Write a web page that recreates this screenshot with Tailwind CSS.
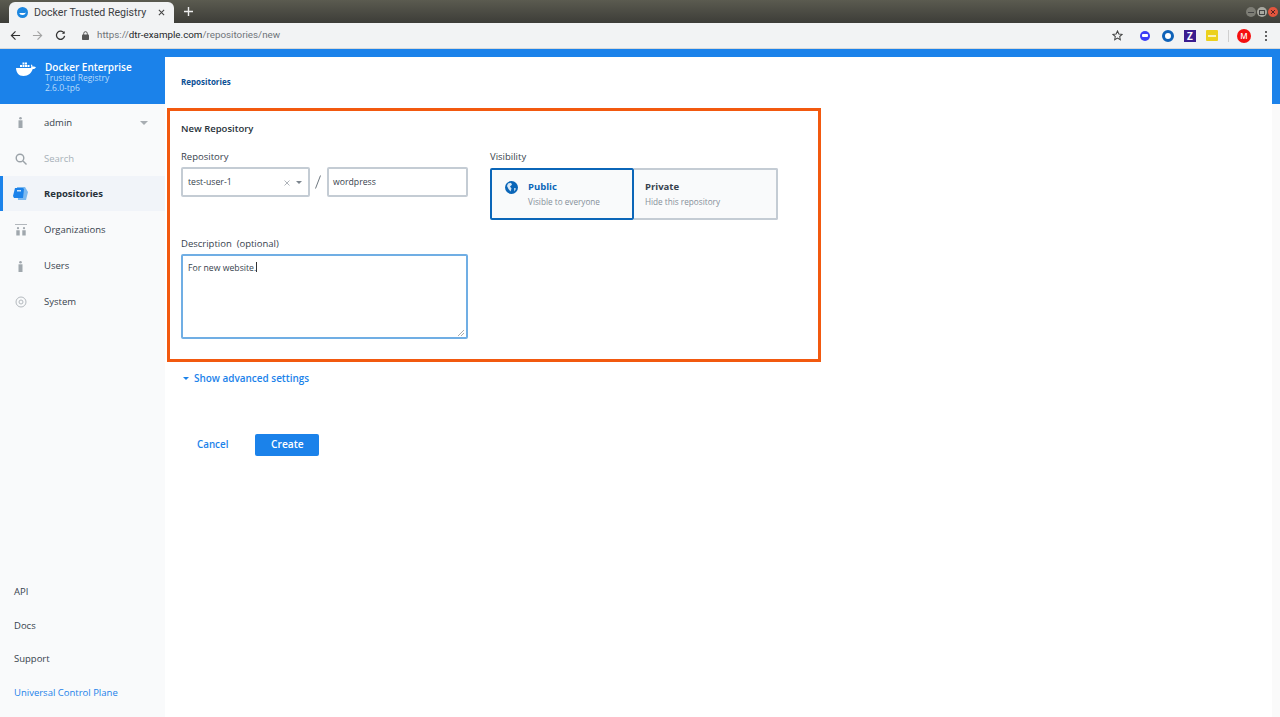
<!DOCTYPE html>
<html lang="en">
<head>
  <meta charset="UTF-8" />
  <title>Docker Trusted Registry</title>
  <script src="https://cdn.jsdelivr.net/npm/@tailwindcss/browser@4"></script>
</head>
<body class="h-[717px] w-[1280px] overflow-hidden bg-white font-['Open_Sans',sans-serif] text-[#37424d]">
  <!-- browser title bar -->
  <div class="flex h-[23px] items-end bg-gradient-to-b from-[#5b5b50] to-[#3d3d38] pl-[9px]">
    <div class="flex h-[21px] w-[165px] items-center rounded-t-[6px] bg-[#f2f3f4] pl-[8px] pr-[9px]">
      <svg class="h-[11px] w-[11px]" viewBox="0 0 12 12"><circle cx="6" cy="6" r="6" fill="#1d87e0"/><path d="M2.500 6.500h6c.6 0 1-.5 1.200-1-.3 2-1.600 3.200-3.700 3.200-2 0-3.200-.9-3.500-2.200z" fill="#fff"/></svg>
      <span class="ml-[6px] font-['Roboto',sans-serif] text-[10.600px] text-[#3c4043]">Docker Trusted Registry</span>
      <svg class="ml-auto h-[7px] w-[7px]" viewBox="0 0 8 8"><path d="M1 1l6 6M7 1L1 7" stroke="#444" stroke-width="1.200"/></svg>
    </div>
    <svg class="mb-[7px] ml-[10px] h-[9px] w-[9px]" viewBox="0 0 9 9"><path d="M4.500 0v9M0 4.500h9" stroke="#eee" stroke-width="1.400"/></svg>
    <div class="mb-[6px] ml-auto mr-[2px] flex gap-[1px]">
      <span class="flex h-[10px] w-[10px] items-center justify-center rounded-full bg-[#7d7d75]"><span class="h-px w-[6px] bg-[#444]"></span></span>
      <span class="flex h-[10px] w-[10px] items-center justify-center rounded-full bg-[#a8a8a0]"><span class="h-[5px] w-[6px] border border-[#444]"></span></span>
      <span class="flex h-[10px] w-[10px] items-center justify-center rounded-full bg-[#e2553d]">
        <svg class="h-[6px] w-[6px]" viewBox="0 0 6 6"><path d="M1 1l4 4M5 1L1 5" stroke="#522" stroke-width="1"/></svg>
      </span>
    </div>
  </div>
  <!-- browser toolbar -->
  <div class="flex h-[26px] items-center border-b border-[#d8d8d8] bg-[#f2f3f4] pl-[10px] pr-[13px]">
    <svg class="h-[11px] w-[11px]" viewBox="0 0 12 12" fill="none" stroke="#333" stroke-width="1.300"><path d="M11 6H1.500M6 1.500L1.500 6 6 10.500"/></svg>
    <svg class="ml-[11px] h-[11px] w-[11px]" viewBox="0 0 12 12" fill="none" stroke="#a3a3a3" stroke-width="1.300"><path d="M1 6h9.500M6 1.500L10.500 6 6 10.500"/></svg>
    <svg class="ml-[12px] h-[11px] w-[11px]" viewBox="0 0 12 12" fill="none" stroke="#333" stroke-width="1.400"><path d="M10 3.500A4.500 4.500 0 1 0 10.500 6.500"/><path d="M10.500 1v3h-3" fill="#333" stroke="none"/></svg>
    <svg class="ml-[16px] h-[9px] w-[7px]" viewBox="0 0 7 9"><rect y="3.500" width="7" height="5.500" rx=".8" fill="#555"/><path d="M1.700 4V2.500a1.800 1.800 0 0 1 3.600 0V4" fill="none" stroke="#555"/></svg>
    <span class="ml-[8px] font-['Roboto',sans-serif] text-[9.800px] text-[#70757a]">https://<span class="text-[#24272a]">dtr-example.com</span>/repositories/new</span>
    <svg class="ml-auto h-[11px] w-[11px]" viewBox="0 0 12 12" fill="none" stroke="#444" stroke-width="1.100"><path d="M6 1l1.500 3.300 3.500.4-2.600 2.400.7 3.500L6 8.900l-3.100 1.700.7-3.500L1 4.700l3.500-.4z"/></svg>
    <span class="ml-[17px] flex h-[10px] w-[10px] items-center justify-center rounded-full bg-[#3d3df5]"><span class="h-[3px] w-[6px] rounded-[1px] bg-white"></span></span>
    <span class="ml-[12px] h-[12px] w-[12px] rounded-full border-[3px] border-[#0f62b8] bg-white"></span>
    <span class="ml-[10px] flex h-[12px] w-[12px] items-center justify-center bg-[#3b1d8f] text-[10px] leading-none font-bold text-white">Z</span>
    <span class="ml-[10px] flex h-[11px] w-[12px] items-center justify-center rounded-[1px] bg-[#ecd11d]"><span class="h-[2px] w-[8px] bg-white/70"></span></span>
    <span class="ml-[10px] h-[12px] w-px bg-[#cfcfcf]"></span>
    <span class="ml-[8px] flex h-[14px] w-[14px] items-center justify-center rounded-full bg-[#f50f0f] text-[8px] leading-none font-semibold text-white">M</span>
    <span class="ml-[14px] flex flex-col gap-[2px]">
      <span class="h-[2px] w-[2px] rounded-full bg-[#333]"></span>
      <span class="h-[2px] w-[2px] rounded-full bg-[#333]"></span>
      <span class="h-[2px] w-[2px] rounded-full bg-[#333]"></span>
    </span>
  </div>

  <div class="flex h-[668px]">
    <!-- sidebar -->
    <aside class="flex w-[165px] shrink-0 flex-col bg-[#f9fafb]">
      <div class="flex h-[55px] items-start bg-[#1b82ea] pl-[16px] pt-[11px]">
        <svg class="mt-[2px] h-[15px] w-[21px]" viewBox="0 0 21 15" fill="#fff"><path d="M4 3h2v2H4zM6.500 3h2v2h-2zM9 3h2v2H9zM6.500.5h2v2h-2zM9 .5h2v2H9zM11.500 3h2v2h-2zM9-2h2v2H9z"/><path d="M0 6h15c.5-1 .3-2.200-.2-3l.8-.5c.7.6 1 1.500 1 2.300.9-.4 2.300-.3 3.400.4-.7 1.400-2 1.800-3.300 1.800C15.500 11 12.500 14 7.500 14 2.500 14 .3 10.500 0 6z"/></svg>
        <div class="ml-[8px] mt-[1px] text-[8.500px] leading-[10px] text-[#b9dbfb]">
          <div class="text-[10px] leading-[12px] font-semibold text-white">Docker Enterprise</div>
          <div>Trusted Registry</div>
          <div>2.6.0-tp6</div>
        </div>
      </div>
      <nav class="flex flex-col text-[9.500px]">
        <div class="flex h-[35.800px] items-center pl-[16px] pt-[2px]">
          <svg class="h-[11px] w-[9px] fill-[#a0a7ad]" viewBox="0 0 7 11"><circle cx="3.500" cy="1.300" r="1.300"/><rect x="1.500" y="3.300" width="4" height="7.700"/></svg>
          <span class="ml-[19px]">admin</span>
          <span class="ml-auto mr-[17px] h-0 w-0 border-x-[4px] border-t-[4px] border-x-transparent border-t-[#a8adb2]"></span>
        </div>
        <div class="flex h-[35.800px] items-center pl-[15px] pt-[2px]">
          <svg class="h-[12px] w-[12px]" viewBox="0 0 12 12" fill="none" stroke="#9ba2a8" stroke-width="1.400"><circle cx="5" cy="5" r="3.800"/><path d="M8 8l3.500 3.500"/></svg>
          <span class="ml-[17px] text-[#a7b0b8]">Search</span>
        </div>
        <div class="flex h-[35.800px] items-center border-l-[3px] border-[#1b82ea] bg-[#f1f4f9] pl-[10px] pt-[2px]">
          <svg class="h-[14px] w-[15px]" viewBox="0 0 15 14"><path d="M4 0h8l3 5-2 8H5z" fill="#7db9ef"/><path d="M2 1h8l1 1-1 9H1L0 9z" fill="#1b82ea"/><path d="M4 3h4v1.500H4z" fill="#cfe5fa"/></svg>
          <span class="ml-[16px] font-bold text-[#27313a]">Repositories</span>
        </div>
        <div class="flex h-[35.800px] items-center pl-[15px] pt-[2px]">
          <svg class="h-[12px] w-[12px] fill-[#a0a7ad]" viewBox="0 0 12 12"><path d="M0 0h12v.8H0z"/><circle cx="3" cy="4.200" r="1.100"/><circle cx="9" cy="4.200" r="1.100"/><path d="M1.300 6.200h3.400v5.300H1.300zM7.300 6.200h3.400v5.300H7.300z"/></svg>
          <span class="ml-[17px]">Organizations</span>
        </div>
        <div class="flex h-[35.800px] items-center pl-[16px] pt-[2px]">
          <svg class="h-[11px] w-[9px] fill-[#a0a7ad]" viewBox="0 0 7 11"><circle cx="3.500" cy="1.300" r="1.300"/><rect x="1.500" y="3.300" width="4" height="7.700"/></svg>
          <span class="ml-[19px]">Users</span>
        </div>
        <div class="flex h-[35.800px] items-center pl-[15px] pt-[2px]">
          <svg class="h-[12px] w-[12px]" viewBox="0 0 12 12" fill="none" stroke="#b4b9be"><circle cx="6" cy="6" r="5"/><circle cx="6" cy="6" r="2"/></svg>
          <span class="ml-[17px]">System</span>
        </div>
      </nav>
      <div class="mt-auto flex flex-col pb-[7px] pl-[14px] text-[9.500px]">
        <a class="flex h-[33.600px] items-center">API</a>
        <a class="flex h-[33.600px] items-center">Docs</a>
        <a class="flex h-[33.600px] items-center">Support</a>
        <a class="flex h-[33.600px] items-center text-[#1b82ea]">Universal Control Plane</a>
      </div>
    </aside>

    <!-- main area -->
    <main class="flex min-w-0 flex-1 flex-col">
      <div class="h-[8px] shrink-0 bg-[#1b82ea]"></div>
      <div class="flex min-h-0 flex-1">
        <div class="min-w-0 flex-1">
          <div class="flex h-[49px] items-center pl-[16px] text-[8px] font-bold text-[#0b4f94]">Repositories</div>

          <form class="ml-[2px] mt-[2px] h-[254px] w-[654px] border-[3px] border-[#f2590f] pl-[11px] pr-[11px] pt-[11px]">
            <h2 class="text-[9.500px] leading-[13px] font-semibold text-[#27313a]">New Repository</h2>
            <div class="mt-[15px] flex">
              <div class="w-[309px]">
                <label class="block text-[9.500px] leading-[13px]">Repository</label>
                <div class="mt-[4px] flex items-center">
                  <div class="flex h-[30px] w-[129px] items-center rounded-[2px] border-2 border-[#c4ccd4] pl-[5px] pr-[6px] pt-[1px] text-[8.700px]">
                    <span>test-user-1</span>
                    <svg class="ml-auto h-[6px] w-[6px]" viewBox="0 0 6 6"><path d="M.5.5l5 5M5.500.5l-5 5" stroke="#9aa1a8" stroke-width=".8"/></svg>
                    <span class="ml-[6px] h-0 w-0 border-x-[3.500px] border-t-[3.500px] border-x-transparent border-t-[#7c858e]"></span>
                  </div>
                  <svg class="ml-[4px] mr-[5px] h-[14px] w-[8px]" viewBox="0 0 8 14"><path d="M6.500.5l-5 13" stroke="#6f7880"/></svg>
                  <div class="flex h-[30px] w-[141px] items-center rounded-[2px] border-2 border-[#c4ccd4] pl-[4px] pt-[1px] text-[8.700px]">wordpress</div>
                </div>
              </div>
              <div>
                <label class="block text-[9.500px] leading-[13px]">Visibility</label>
                <div class="mt-[5px] flex h-[52px] w-[288px]">
                  <div class="flex w-[144px] rounded-[2px] border-2 border-[#0b66b8] bg-[#f9fafb] pl-[13px] pt-[10px]">
                    <svg class="mt-[1px] h-[13px] w-[13px]" viewBox="0 0 13 13"><circle cx="6.500" cy="6.500" r="6.500" fill="#0b66b8"/><path d="M3 2.500l3-.8 1 2-2 1.800 1.500 2-1 3L3.500 8 2 5zM9 7l2 .5-1.500 3z" fill="#fff" opacity=".85"/></svg>
                    <div class="ml-[10px]">
                      <div class="text-[9.500px] leading-[13px] font-bold text-[#0b66b8]">Public</div>
                      <div class="mt-[3px] text-[8.200px] leading-[11px] text-[#86909a]">Visible to everyone</div>
                    </div>
                  </div>
                  <div class="w-[144px] rounded-r-[2px] border-2 border-l-0 border-[#c4ccd4] bg-[#f9fafb] pl-[11px] pt-[10px]">
                    <div class="text-[9.500px] leading-[13px] font-bold text-[#37424d]">Private</div>
                    <div class="mt-[3px] text-[8.200px] leading-[11px] text-[#86909a]">Hide this repository</div>
                  </div>
                </div>
              </div>
            </div>
            <label class="block pt-[17px] text-[9.500px] leading-[13px]">Description&nbsp; (optional)</label>
            <div class="relative mt-[4px] h-[85px] w-[287px] rounded-[2px] border-2 border-[#70aee4] pl-[5px] pt-[5px] text-[8.700px] leading-[13px]">
              For new website.<span class="inline-block h-[10px] w-px translate-y-[1px] bg-[#333]"></span>
              <svg class="absolute right-[2px] bottom-[1px] h-[6px] w-[6px]" viewBox="0 0 6 6"><path d="M0 6l6-6M3 6l3-3" stroke="#888" stroke-width=".7"/></svg>
            </div>
          </form>

          <div class="ml-[18px] mt-[9px] flex items-center text-[9.950px] font-semibold text-[#1b82ea]">
            <span class="h-0 w-0 border-x-[3.500px] border-t-[3.500px] border-x-transparent border-t-[#1b82ea]"></span>
            <span class="ml-[5px]">Show advanced settings</span>
          </div>

          <div class="ml-[32px] mt-[48px] flex items-center text-[9.800px] font-semibold">
            <button class="text-[#1b82ea]">Cancel</button>
            <button class="ml-[27px] h-[22px] w-[64px] rounded-[2px] bg-[#1b82ea] text-[10.200px] text-white">Create</button>
          </div>
        </div>
        <!-- scrollbar -->
        <div class="w-[8px] shrink-0 bg-[#fafafa]">
          <div class="h-[47px] bg-[#1b82ea]"></div>
        </div>
      </div>
    </main>
  </div>
</body>
</html>
